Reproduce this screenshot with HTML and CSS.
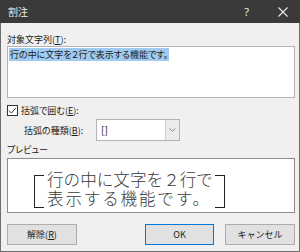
FILE: index.html
```html
<!DOCTYPE html>
<html>
<head>
    <title>割注</title>
    <link rel="stylesheet" href="styles.css">
</head>
<body>
    <div class="dialog">
        <div class="titlebar">
            <span class="title">割注</span>
            <span class="help">?</span>
            <svg class="close" width="10" height="10" viewBox="0 0 10 10">
                <path d="M0.5 0.5 L9.5 9.5 M9.5 0.5 L0.5 9.5" stroke="#e8e8e8" stroke-width="1.1" fill="none"/>
            </svg>
        </div>

        <div class="content">
            <div class="label">対象文字列(<u>T</u>):</div>
            <div class="textbox"><span class="sel">行の中に文字を２行で表示する機能です。</span></div>

            <div class="check-row">
                <span class="checkbox">
                    <svg width="9" height="9" viewBox="0 0 9 9">
                        <path d="M1 4.6 L3.4 7 L8 1.8" stroke="#333" stroke-width="1" fill="none"/>
                    </svg>
                </span>
                <span>括弧で囲む(<u>E</u>):</span>
            </div>

            <div class="combo-row">
                <span class="combo-label">括弧の種類(<u>B</u>):</span>
                <div class="combo">
                    <span class="combo-value">[]</span>
                    <span class="combo-arrow">
                        <svg width="7" height="4" viewBox="0 0 7 4">
                            <path d="M0.5 0.5 L3.5 3.3 L6.5 0.5" stroke="#8a8a8a" stroke-width="1" fill="none"/>
                        </svg>
                    </span>
                </div>
            </div>

            <div class="label preview-label">プレビュー</div>
            <div class="preview">
                <span class="bracket left"></span>
                <div class="preview-text">
                    <div class="line">行の中に文字を２行で</div>
                    <div class="line spread">表示する機能です。</div>
                </div>
                <span class="bracket right"></span>
            </div>

            <div class="buttons">
                <button class="btn">解除(<u>R</u>)</button>
                <button class="btn default">OK</button>
                <button class="btn">キャンセル</button>
            </div>
        </div>
    </div>
</body>
</html>
```

FILE: styles.css
```css
html, body {
    margin: 0;
    padding: 0;
}
body {
    font-family: "Noto Sans CJK JP", "Noto Sans", sans-serif;
    font-size: 9px;
    color: #1a1a1a;
    font-feature-settings: "palt";
}
.dialog {
    width: 300px;
    height: 252px;
    box-sizing: border-box;
    background: #f0f0f0;
    border: 1px solid #6e6e6e;
    border-top: none;
    display: flex;
    flex-direction: column;
}
.titlebar {
    height: 23px;
    margin: 0 -1px;
    background: #3a3a3a;
    color: #ececec;
    display: flex;
    align-items: center;
    padding: 0 12px 0 8px;
    font-size: 10px;
}
.title {
    flex: 1;
}
.help {
    font-family: "Noto Sans", sans-serif;
    font-size: 11px;
    margin-right: 29px;
}
.content {
    padding: 0 4px 0 6px;
}
.label {
    height: 12px;
    line-height: 12px;
    margin-top: 11px;
}
.textbox {
    height: 52px;
    box-sizing: border-box;
    background: #fff;
    border: 1px solid #b4b4b4;
    padding: 1px 1px;
    line-height: 13px;
}
.sel {
    background: #9fcbf0;
    padding: 0 1px;
}
.check-row {
    display: flex;
    align-items: center;
    gap: 3px;
    height: 11px;
    margin-top: 7px;
}
.checkbox {
    width: 11px;
    height: 11px;
    box-sizing: border-box;
    border: 1px solid #333;
    background: #fff;
    display: flex;
    align-items: center;
    justify-content: center;
}
.combo-row {
    display: flex;
    align-items: center;
    height: 22px;
    margin-top: 3px;
}
.combo-label {
    width: 72px;
    margin-left: 17px;
}
.combo {
    width: 84px;
    height: 22px;
    box-sizing: border-box;
    background: #fff;
    border: 1px solid #b4b4b4;
    display: flex;
}
.combo-value {
    flex: 1;
    line-height: 20px;
    padding-left: 4px;
    font-size: 10px;
}
.combo-arrow {
    width: 13px;
    background: #ececec;
    border-left: 1px solid #d0d0d0;
    display: flex;
    align-items: center;
    justify-content: center;
}
.preview-label {
    margin-top: 3px;
}
.preview {
    height: 55px;
    box-sizing: border-box;
    margin-top: 2px;
    background: #fff;
    border: 1px solid #8c8c8c;
    display: flex;
    align-items: flex-start;
    padding: 11px 0 0 26px;
}
.preview-text {
    width: 167px;
    font-size: 16.6px;
    line-height: 19px;
    font-weight: 300;
    font-feature-settings: normal;
    color: #3a3a3a;
    padding: 0 1px 0 3px;
}
.line {
    height: 19px;
    white-space: nowrap;
}
.line.spread {
    letter-spacing: 1.8px;
}
.bracket {
    width: 9px;
    height: 31px;
    margin-top: 5px;
    border: 1.5px solid #222;
}
.bracket.left {
    border-right: none;
}
.bracket.right {
    border-left: none;
}
.buttons {
    display: flex;
    gap: 11px;
    margin-top: 11px;
}
.btn {
    height: 21px;
    box-sizing: border-box;
    background: #e1e1e1;
    border: 1px solid #adadad;
    font-family: inherit;
    font-size: 9px;
    color: #1a1a1a;
    padding: 0;
    width: 70px;
}
.btn.default {
    margin-left: auto;
    border-color: #0078d7;
    width: 69px;
}
```
